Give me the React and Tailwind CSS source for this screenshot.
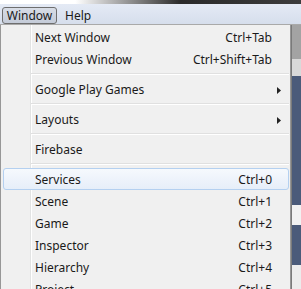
import React from "react";

const font = { fontFamily: '"Noto Sans", "Liberation Sans", sans-serif' };

function Arrow() {
  return (
    <svg width="4" height="7" viewBox="0 0 4 7" className="block">
      <polygon points="0,0 4,3.5 0,7" fill="#222" />
    </svg>
  );
}

function Item({ label, shortcut, submenu, active }) {
  if (active) {
    return (
      <div className="h-[22px] shrink-0 ml-[2px] mr-[1px] pt-px flex items-center rounded-[3px] border border-[#b4d0f0] bg-[linear-gradient(to_bottom,#f6f9fd,#e6eef9)]">
        <span className="pl-[31px] flex-1">{label}</span>
        <span className="pr-[16px]">{shortcut}</span>
      </div>
    );
  }
  return (
    <div className="h-[22px] shrink-0 pt-[2px] flex items-center">
      <span className="pl-[34px] flex-1">{label}</span>
      {shortcut && <span className="pr-[18px]">{shortcut}</span>}
      {submenu && (
        <span className="pr-[9px]">
          <Arrow />
        </span>
      )}
    </div>
  );
}

function Separator() {
  return (
    <div className="h-[8px] shrink-0 flex flex-col justify-center pl-[30px] pr-[1px]">
      <div className="h-px bg-[#e0e0e0]" />
      <div className="h-px bg-white" />
    </div>
  );
}

export default function App() {
  return (
    <div
      className="w-[301px] h-[289px] overflow-hidden flex flex-col text-[12px] text-[#1a1a1a] bg-[#f0f0f0]"
      style={font}
    >
      {/* window title strip */}
      <div className="h-[4px] shrink-0 bg-[linear-gradient(to_right,#ffffff_0%,#ffffff_25%,#2a2a2a_60%,#3c3c3c_100%)]" />

      {/* menubar */}
      <div className="h-[20px] shrink-0 flex items-start pt-[3px] bg-[linear-gradient(to_bottom,#e4eaf5,#d6deec)]">
        <div className="ml-[2px] h-[17px] w-[55px] pt-px flex items-center justify-center rounded-[3px] border border-[#6e6e6e] bg-[linear-gradient(to_bottom,#d8dde6,#c4cbd8)]">
          Window
        </div>
        <div className="ml-[8px] h-[17px] pt-px flex items-center">Help</div>
      </div>
      <div className="h-px shrink-0 bg-[#a9a9a9]" />

      <div className="flex flex-1 min-h-0">
        {/* dropdown */}
        <div className="w-[291px] flex flex-col border-l border-r border-[#979797] pt-px bg-[linear-gradient(to_right,#f0f0f0_0,#f0f0f0_29px,#e2e3e3_29px,#e2e3e3_30px,#ffffff_30px,#ffffff_31px,#f0f0f0_31px)]">
          <Item label="Next Window" shortcut="Ctrl+Tab" />
          <Item label="Previous Window" shortcut="Ctrl+Shift+Tab" />
          <Separator />
          <Item label="Google Play Games" submenu />
          <Separator />
          <Item label="Layouts" submenu />
          <Separator />
          <Item label="Firebase" />
          <Separator />
          <Item label="Services" shortcut="Ctrl+0" active />
          <Item label="Scene" shortcut="Ctrl+1" />
          <Item label="Game" shortcut="Ctrl+2" />
          <Item label="Inspector" shortcut="Ctrl+3" />
          <Item label="Hierarchy" shortcut="Ctrl+4" />
          <Item label="Project" shortcut="Ctrl+5" />
        </div>

        {/* window behind the menu */}
        <div className="flex-1 flex flex-col border-l border-[#7a7a7a]">
          <div className="h-[34px] shrink-0 bg-[#a3a3a3]" />
          <div className="h-[17px] shrink-0 bg-[#d9d9d9]" />
          <div className="h-[129px] shrink-0 bg-[#4b5b7a]" />
          <div className="h-[20px] shrink-0 bg-[#f2f2f2]" />
          <div className="h-[40px] shrink-0 bg-[#4b5b7a]" />
          <div className="flex-1 bg-[#ececec]" />
        </div>
      </div>
    </div>
  );
}
